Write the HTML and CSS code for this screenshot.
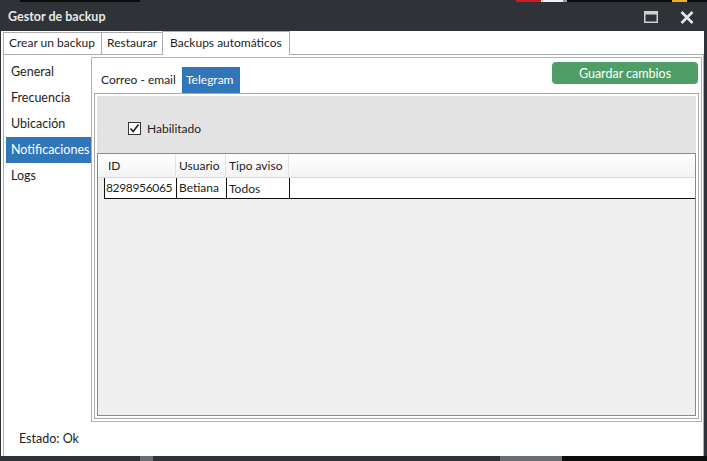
FILE: index.html
```html
<!DOCTYPE html>
<html lang="es">
<head>
<meta charset="utf-8">
<title>Gestor de backup</title>
<link rel="stylesheet" href="styles.css">
</head>
<body>
<div class="window">
  <div class="topstrip">
    <span class="seg s-dark" style="width:20px"></span>
    <span class="seg s-black" style="width:120px"></span>
    <span class="seg s-dark" style="width:376px"></span>
    <span class="seg s-red" style="width:25px"></span>
    <span class="seg s-white" style="width:22px"></span>
    <span class="seg s-gray" style="width:4px"></span>
    <span class="seg s-black" style="width:105px"></span>
    <span class="seg s-yellow" style="width:15px"></span>
    <span class="seg s-black" style="width:20px"></span>
  </div>
  <div class="titlebar">
    <span class="title">Gestor de backup</span>
    <div class="controls">
      <svg class="ico-max" width="14" height="12" viewBox="0 0 14 12"><rect x="0.75" y="0.75" width="12.5" height="10.5" fill="none" stroke="#cfd0d1" stroke-width="1.5"/><rect x="0" y="0" width="14" height="3.5" fill="#cfd0d1"/></svg>
      <svg class="ico-close" width="14" height="13" viewBox="0 0 14 13"><path d="M1.5 1 L12.5 12 M12.5 1 L1.5 12" stroke="#e4e5e5" stroke-width="2.6" stroke-linecap="butt"/></svg>
    </div>
  </div>
  <div class="client">
    <div class="tabstrip">
      <div class="tab t1">Crear un backup</div>
      <div class="tab t2">Restaurar</div>
      <div class="tab t3 active">Backups automáticos</div>
    </div>
    <div class="page">
      <div class="main">
        <nav class="nav">
          <div class="nav-item">General</div>
          <div class="nav-item">Frecuencia</div>
          <div class="nav-item">Ubicación</div>
          <div class="nav-item selected">Notificaciones</div>
          <div class="nav-item">Logs</div>
        </nav>
        <div class="panel">
          <div class="panel-head">
            <div class="subtabs">
              <div class="subtab st1">Correo - email</div>
              <div class="subtab active">Telegram</div>
            </div>
            <button class="btn-save">Guardar cambios</button>
          </div>
          <div class="subpage">
            <div class="opts">
              <label class="check">
                <span class="box"><svg width="11" height="11" viewBox="0 0 11 11"><path d="M1.5 5.5 L4.2 8.5 L9.6 1.6" fill="none" stroke="#222" stroke-width="1.7"/></svg></span>
                <span>Habilitado</span>
              </label>
            </div>
            <div class="grid">
              <div class="grow head">
                <div class="c rh"></div>
                <div class="c c-id">ID</div>
                <div class="c c-user">Usuario</div>
                <div class="c c-tipo">Tipo aviso</div>
                <div class="c c-fill"></div>
              </div>
              <div class="grow data">
                <div class="c rh"></div>
                <div class="c c-id num">8298956065</div>
                <div class="c c-user">Betiana</div>
                <div class="c c-tipo low">Todos</div>
                <div class="c c-fill"></div>
              </div>
            </div>
          </div>
        </div>
      </div>
      <div class="status">Estado: Ok</div>
    </div>
  </div>
  <div class="bottomstrip">
    <span class="seg s-dark" style="width:140px"></span>
    <span class="seg s-gray2" style="width:13px"></span>
    <span class="seg s-dark" style="width:347px"></span>
    <span class="seg s-gray2" style="width:62px"></span>
    <span class="seg s-black" style="width:145px"></span>
  </div>
</div>
</body>
</html>
```
FILE: styles.css
```css
* { box-sizing: border-box; }
html, body { margin: 0; padding: 0; }
body {
  width: 707px;
  height: 461px;
  overflow: hidden;
  background: #2f3337;
  font-family: Lato, "Noto Sans", sans-serif;
  font-size: 12px;
  color: #1e1e1e;
}
.window { display: flex; flex-direction: column; width: 707px; height: 461px; }

.topstrip, .bottomstrip { display: flex; flex: none; }
.topstrip { height: 2px; }
.bottomstrip { height: 5px; }
.seg { display: block; height: 100%; flex: none; }
.s-dark { background: #2f3337; }
.s-black { background: #0c0c0c; }
.s-red { background: #d11a1a; }
.s-white { background: #f0f0f0; }
.s-gray { background: #9a9a9a; }
.s-gray2 { background: #6b6e70; }
.s-yellow { background: #e8b030; }

.titlebar {
  height: 29px;
  flex: none;
  display: flex;
  align-items: center;
  justify-content: space-between;
  padding-left: 8px;
  background: #2f3337;
}
.title { color: #e8e8e8; font-weight: bold; font-size: 12.5px; }
.controls { display: flex; align-items: center; gap: 22px; padding-right: 13px; padding-top: 1px; }

.client {
  flex: none;
  height: 425px;
  margin-left: 1px;
  margin-right: 3px;
  background: #fff;
  display: flex;
  flex-direction: column;
}

.tabstrip {
  height: 23px;
  flex: none;
  display: flex;
  align-items: flex-end;
  padding-left: 2px;
  position: relative;
  z-index: 1;
}
.tab {
  height: 22px;
  padding: 0 0 0 5px;
  border: 1px solid #adadad;
  border-bottom: none;
  margin-right: -1px;
  line-height: 20px;
  background: #fff;
  white-space: nowrap;
}
.t1 { width: 99px; }
.t2 { width: 62px; padding-left: 5px; }
.t3 { width: 128px; }
.tab.active {
  height: 24px;
  padding-left: 7px;
  line-height: 21px;
  margin-bottom: -1px;
}

.page {
  flex: 1;
  margin-left: 2px;
  border: 1px solid #adadad;
  border-bottom: none;
  display: flex;
  flex-direction: column;
}
.main { display: flex; height: 367px; flex: none; }

.nav { width: 87px; flex: none; padding: 4px 0 0 2px; }
.nav-item { height: 26px; line-height: 26px; padding-left: 5px; white-space: nowrap; font-size: 12.5px; }
.nav-item.selected { background: #3176b8; color: #fff; }

.panel {
  width: 611px;
  height: 365px;
  margin-top: 2px;
  border: 1px solid #b0b0b0;
  display: flex;
  flex-direction: column;
}
.panel-head {
  height: 35px;
  flex: none;
  display: flex;
  justify-content: space-between;
  align-items: flex-start;
}
.subtabs { display: flex; align-self: flex-end; padding-left: 5px; }
.subtab { height: 26px; line-height: 26px; padding: 0 0 0 4px; white-space: nowrap; color: #222; }
.st1 { width: 84px; }
.subtab.active { background: #3176b8; color: #fff; margin-left: 1px; width: 58px; padding: 0 0 0 4px; }
.btn-save {
  margin-top: 4px;
  margin-right: 3px;
  width: 146px;
  height: 22px;
  border: none;
  border-radius: 4px;
  background: #4f9e68;
  color: #fff;
  font-family: inherit;
  font-size: 12.5px;
  padding: 0;
}

.subpage {
  flex: 1;
  margin: 0 2px 2px 2px;
  border: 1px solid #a8a8a8;
  padding: 2px;
  display: flex;
  flex-direction: column;
}
.opts { height: 57px; flex: none; background: #e3e3e3; padding: 26px 0 0 31px; }
.check { display: flex; align-items: center; gap: 6px; height: 13px; }
.box {
  width: 13px; height: 13px;
  border: 1px solid #333;
  background: #fff;
  display: flex; align-items: center; justify-content: center;
}
.box svg { display: block; }

.grid {
  flex: 1;
  border: 1px solid #6a8fc0;
  background: #efefef;
}
.grow { display: flex; }
.grow.head {
  height: 24px;
  background: linear-gradient(#ffffff, #f3f3f3);
  border-bottom: 1px solid #d8d8d8;
}
.grow.data { height: 21px; background: #fff; border-bottom: 1px solid #111; margin-left: 6px; }
.c { white-space: nowrap; flex: none; overflow: hidden; }
.rh { width: 6px; }
.grow.data .rh { display: none; }
.c-id { width: 72px; }
.c-user { width: 50px; }
.c-tipo { width: 63px; }
.c-fill { flex: 1; }
.head .c { line-height: 24px; }
.head .c-id, .head .c-user, .head .c-tipo { border-right: 1px solid #e2e2e2; }
.head .c-id { padding-left: 4px; }
.head .c-user, .head .c-tipo { padding-left: 3px; }
.data .c { border-left: 1px solid #111; line-height: 20px; padding-left: 1px; }
.data .num { letter-spacing: -0.35px; }
.data .c-user, .data .c-tipo { padding-left: 2px; }
.data .c-fill { border-left: 1px solid #111; }
.data .low { line-height: 22px; }

.status { padding: 9px 0 0 15px; line-height: 16px; font-size: 12.5px; }
```
